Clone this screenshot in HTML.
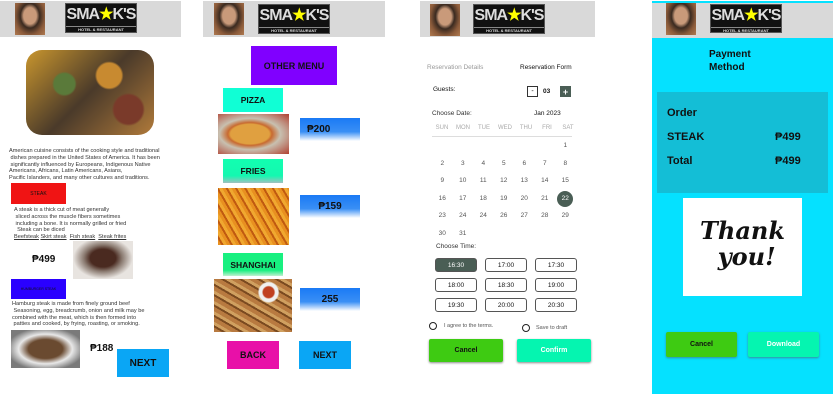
<!DOCTYPE html>
<html><head><meta charset="utf-8"><style>
*{margin:0;padding:0;box-sizing:border-box}
body{width:833px;height:415px;background:#fff;position:relative;overflow:hidden;font-family:"Liberation Sans",sans-serif;color:#111}
.a{position:absolute}
.hdr{background:#d9d9d9}
.av{background:radial-gradient(ellipse at 50% 40%,#c99a7a 0 30%,#3a2a20 45%,#8a5a3a 70%,#b07a50);}
.logo{background:#111;color:#ddd;font-weight:bold;font-size:16px;text-align:center;line-height:22px;letter-spacing:-1px;overflow:hidden;border:1px solid #555}
.logo small{display:block;font-size:4px;line-height:6px;letter-spacing:0;border-top:1px solid #888}
.logo b{color:#ff0}
.t6{font-size:5.6px;line-height:6.8px;color:#333}
.btn{display:flex;align-items:center;justify-content:center;font-weight:bold}
.pr{background:linear-gradient(#1a7af5 0,#3a8ff5 60%,#fff 100%);font-weight:bold;font-size:10px;display:flex;align-items:center}
.tb{border:1px solid #555;border-radius:3px;font-size:6.5px;display:flex;align-items:center;justify-content:center;width:42px;height:14px}
.dn{font-size:6px;color:#aaa;width:20px;text-align:center}
</style></head><body>

<!-- Panel 1 -->
<div class="a hdr" style="left:0;top:1px;width:181px;height:36px"></div>
<div class="a av" style="left:15px;top:3px;width:30px;height:32px"></div>
<div class="a logo" style="left:65px;top:3px;width:72px;height:30px">SMA<b>★</b>K'S<small>HOTEL &amp; RESTAURANT</small></div>
<div class="a" style="left:26px;top:50px;width:128px;height:85px;border-radius:16px;background:radial-gradient(circle at 30% 40%,#5a7a3a 0 10%,transparent 12%),radial-gradient(circle at 65% 30%,#c88a30 0 12%,transparent 14%),radial-gradient(circle at 80% 70%,#7a3a2a 0 12%,transparent 14%),linear-gradient(135deg,#c9962e,#4a3a2a 50%,#b07a3a)"></div>
<div class="a t6" style="left:9px;top:148px;width:170px">American cuisine consists of the cooking style and traditional<br>&nbsp;dishes prepared in the United States of America. It has been<br>&nbsp;significantly influenced by Europeans, Indigenous Native<br>Americans, Africans, Latin Americans, Asians,<br>Pacific Islanders, and many other cultures and traditions.</div>
<div class="a btn" style="left:11px;top:183px;width:55px;height:21px;background:#f01414;font-size:5px;font-weight:normal">STEAK</div>
<div class="a t6" style="left:14px;top:207px;width:130px">A steak is a thick cut of meat generally<br>&nbsp;sliced across the muscle fibers sometimes<br>&nbsp;including a bone. It is normally grilled or fried<br>&nbsp;&nbsp;Steak can be diced<br><u>Beefsteak</u> <u>Skirt steak</u> &nbsp;<u>Fish steak</u> &nbsp;<u>Steak frites</u></div>
<div class="a" style="left:32px;top:254px;font-weight:bold;font-size:10px">₱499</div>
<div class="a" style="left:73px;top:241px;width:60px;height:38px;background:radial-gradient(ellipse at 50% 45%,#4a2a20 0 30%,#8a7a70 45%,#e8e4e0 70%)"></div>
<div class="a btn" style="left:11px;top:279px;width:55px;height:20px;background:#2a00ff;font-size:3.5px;font-weight:normal">HUMBURGER STEAK</div>
<div class="a t6" style="left:12px;top:301px;width:150px">Hamburg steak is made from finely ground beef<br>&nbsp;Seasoning, egg, breadcrumb, onion and milk may be<br>combined with the meat, which is then formed into<br>&nbsp;patties and cooked, by frying, roasting, or smoking.</div>
<div class="a" style="left:11px;top:330px;width:69px;height:38px;background:radial-gradient(ellipse at 50% 50%,#6a4a30 0 35%,#e8e8e8 55%,#7a7a7a 80%)"></div>
<div class="a" style="left:90px;top:343px;font-weight:bold;font-size:10px">₱188</div>
<div class="a btn" style="left:117px;top:349px;width:52px;height:28px;background:#0aa6f5;font-size:10px">NEXT</div>

<!-- Panel 2 -->
<div class="a hdr" style="left:203px;top:1px;width:182px;height:36px"></div>
<div class="a av" style="left:214px;top:3px;width:30px;height:32px"></div>
<div class="a logo" style="left:258px;top:4px;width:72px;height:30px">SMA<b>★</b>K'S<small>HOTEL &amp; RESTAURANT</small></div>
<div class="a btn" style="left:251px;top:46px;width:86px;height:39px;background:#8000ff;font-size:9px">OTHER MENU</div>
<div class="a btn" style="left:223px;top:88px;width:60px;height:24px;background:#10ffd5;font-size:8.5px">PIZZA</div>
<div class="a" style="left:218px;top:114px;width:71px;height:40px;background:radial-gradient(ellipse at 45% 50%,#e0a040 0 35%,#c86a30 40%,#c8c0b0 55%,#b04030)"></div>
<div class="a pr" style="left:300px;top:118px;width:60px;height:23px;padding-left:7px">₱200</div>
<div class="a btn" style="left:223px;top:159px;width:60px;height:24px;background:linear-gradient(#12ffb0 0,#14f8b0 70%,#a0c0c0);font-size:8.5px">FRIES</div>
<div class="a" style="left:218px;top:188px;width:71px;height:57px;background:repeating-linear-gradient(60deg,#e89020 0 3px,#c05a10 3px 5px,#f0a830 5px 8px)"></div>
<div class="a pr" style="left:300px;top:195px;width:60px;height:23px;justify-content:center">₱159</div>
<div class="a btn" style="left:223px;top:253px;width:60px;height:23px;background:linear-gradient(#18f080 0,#18f080 75%,#c0f0d0);font-size:8.5px">SHANGHAI</div>
<div class="a" style="left:214px;top:279px;width:78px;height:53px;background:radial-gradient(circle at 70% 25%,#c04020 0 8%,#f0f0f0 10% 14%,transparent 16%),repeating-linear-gradient(30deg,#b87a40 0 4px,#7a4a20 4px 6px,#d0a060 6px 9px)"></div>
<div class="a pr" style="left:300px;top:288px;width:60px;height:23px;justify-content:center">255</div>
<div class="a btn" style="left:227px;top:341px;width:52px;height:28px;background:#e810a8;font-size:9px">BACK</div>
<div class="a btn" style="left:299px;top:341px;width:52px;height:28px;background:#0aa6f5;font-size:9px">NEXT</div>

<!-- Panel 3 -->
<div class="a hdr" style="left:420px;top:1px;width:175px;height:36px"></div>
<div class="a av" style="left:430px;top:4px;width:30px;height:32px"></div>
<div class="a logo" style="left:473px;top:4px;width:72px;height:30px">SMA<b>★</b>K'S<small>HOTEL &amp; RESTAURANT</small></div>
<div class="a" style="left:427px;top:64px;font-size:6.5px;color:#999">Reservation Details</div>
<div class="a" style="left:520px;top:64px;font-size:6.5px">Reservation Form</div>
<div class="a" style="left:433px;top:86px;font-size:6.5px">Guests:</div>
<div class="a btn" style="left:527px;top:86px;width:11px;height:11px;border:1px solid #333;font-size:7px;font-weight:normal">-</div>
<div class="a" style="left:543px;top:88px;font-size:6.5px;font-weight:bold">03</div>
<div class="a btn" style="left:560px;top:86px;width:11px;height:11px;background:#4a5e55;color:#fff;font-size:9px">+</div>
<div class="a" style="left:432px;top:110px;font-size:6.5px;color:#333">Choose Date:</div>
<div class="a" style="left:534px;top:110px;font-size:6.5px">Jan 2023</div>
<div class="a" style="left:432px;top:125px;display:flex;gap:1px"><div class="dn">SUN</div><div class="dn">MON</div><div class="dn">TUE</div><div class="dn">WED</div><div class="dn">THU</div><div class="dn">FRI</div><div class="dn">SAT</div></div>
<div class="a" style="left:432px;top:136px;width:140px;height:1px;background:#ddd"></div>
<div class="a" style="left:432px;top:137px;width:145px;font-size:6.5px;color:#555;line-height:17.6px">
<div style="display:grid;grid-template-columns:repeat(7,20.5px);text-align:center">
<span></span><span></span><span></span><span></span><span></span><span></span><span>1</span>
<span>2</span><span>3</span><span>4</span><span>5</span><span>6</span><span>7</span><span>8</span>
<span>9</span><span>10</span><span>11</span><span>12</span><span>13</span><span>14</span><span>15</span>
<span>16</span><span>17</span><span>18</span><span>19</span><span>20</span><span>21</span><span style="display:flex;align-items:center;justify-content:center"><i style="font-style:normal;width:16px;height:16px;border-radius:50%;background:#4a5e55;color:#fff;line-height:16px">22</i></span>
<span>23</span><span>24</span><span>24</span><span>26</span><span>27</span><span>28</span><span>29</span>
<span>30</span><span>31</span></div></div>
<div class="a" style="left:436px;top:243px;font-size:6.5px;color:#333">Choose Time:</div>
<div class="a tb" style="left:435px;top:258px;background:#4a5e55;color:#fff">16:30</div>
<div class="a tb" style="left:485px;top:258px">17:00</div>
<div class="a tb" style="left:535px;top:258px">17:30</div>
<div class="a tb" style="left:435px;top:278px">18:00</div>
<div class="a tb" style="left:485px;top:278px">18:30</div>
<div class="a tb" style="left:535px;top:278px">19:00</div>
<div class="a tb" style="left:435px;top:298px">19:30</div>
<div class="a tb" style="left:485px;top:298px">20:00</div>
<div class="a tb" style="left:535px;top:298px">20:30</div>
<div class="a" style="left:429px;top:322px;width:8px;height:8px;border:1px solid #222;border-radius:50%"></div>
<div class="a" style="left:444px;top:323px;font-size:5.5px;color:#555">I agree to the terms.</div>
<div class="a" style="left:522px;top:324px;width:8px;height:8px;border:1px solid #222;border-radius:50%"></div>
<div class="a" style="left:536px;top:325px;font-size:5.5px;color:#555">Save to draft</div>
<div class="a btn" style="left:429px;top:339px;width:74px;height:23px;background:#3ecb12;border-radius:2px;font-size:7px;box-shadow:0 1px 2px #888">Cancel</div>
<div class="a btn" style="left:517px;top:339px;width:74px;height:23px;background:#05f5b0;color:#fff;border-radius:2px;font-size:7px;box-shadow:0 1px 2px #888">Confirm</div>

<!-- Panel 4 -->
<div class="a" style="left:652px;top:1px;width:181px;height:393px;background:#05e1ff"></div>
<div class="a hdr" style="left:652px;top:3px;width:181px;height:35px"></div>
<div class="a av" style="left:666px;top:3px;width:30px;height:32px"></div>
<div class="a logo" style="left:710px;top:4px;width:72px;height:29px">SMA<b>★</b>K'S<small>HOTEL &amp; RESTAURANT</small></div>
<div class="a" style="left:709px;top:48px;font-weight:bold;font-size:10px;line-height:13px">Payment<br>Method</div>
<div class="a" style="left:657px;top:92px;width:171px;height:101px;background:#14bed6"></div>
<div class="a" style="left:667px;top:107px;font-weight:bold;font-size:11px">Order</div>
<div class="a" style="left:667px;top:131px;font-weight:bold;font-size:11px">STEAK</div>
<div class="a" style="left:775px;top:131px;font-weight:bold;font-size:11px">₱499</div>
<div class="a" style="left:667px;top:155px;font-weight:bold;font-size:11px">Total</div>
<div class="a" style="left:775px;top:155px;font-weight:bold;font-size:11px">₱499</div>
<div class="a" style="left:683px;top:198px;width:119px;height:98px;background:#fff;font-family:'DejaVu Serif',serif;font-style:italic;font-weight:bold;font-size:24px;line-height:26px;text-align:center;padding-top:20px">Thank<br>&nbsp;you!</div>
<div class="a btn" style="left:666px;top:332px;width:71px;height:25px;background:#3ecb12;border-radius:2px;font-size:7px;box-shadow:0 1px 2px #3a8a9a">Cancel</div>
<div class="a btn" style="left:748px;top:332px;width:71px;height:25px;background:#05f5b0;color:#fff;border-radius:2px;font-size:7px;box-shadow:0 1px 2px #3a8a9a">Download</div>
</body></html>
